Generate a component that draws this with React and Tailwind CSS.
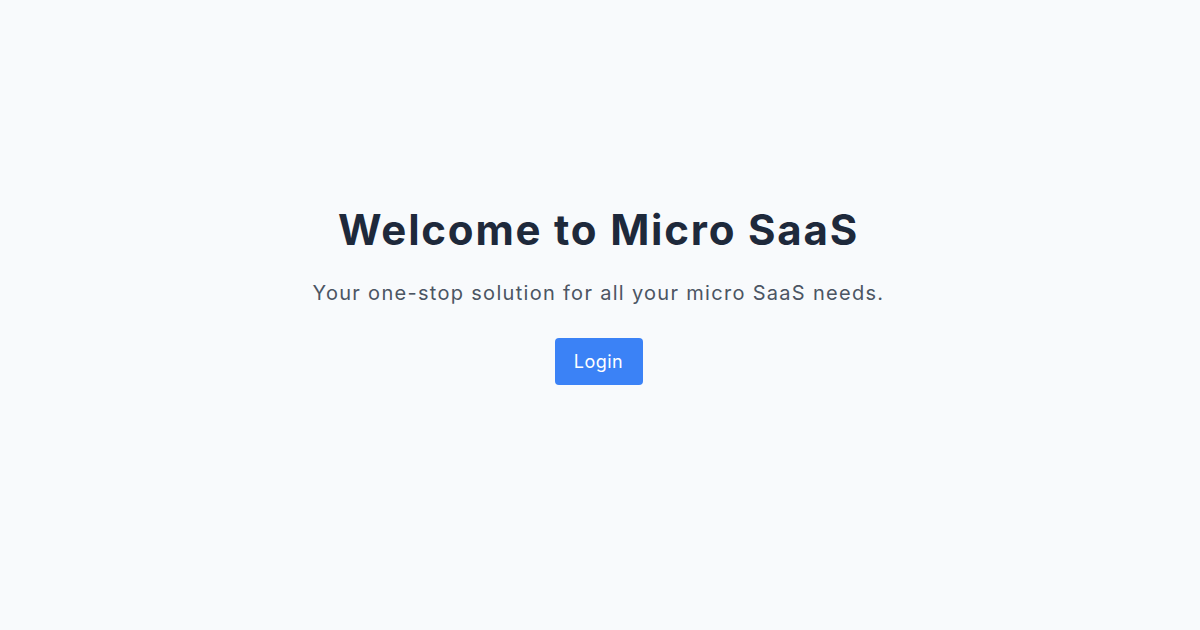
export default function App() {
    return (
        <div className="min-h-screen w-full bg-[#f8fafc] flex flex-col items-center pt-[203px] pr-[3px] font-['Inter',sans-serif]">
            <h1 className="text-[42px] leading-[54px] font-bold text-[#1e293b] tracking-[1.8px]">
                Welcome to Micro SaaS
            </h1>
            <p className="mt-[21px] text-[20px] leading-[30px] text-[#4b5563] tracking-[1.3px]">
                Your one-stop solution for all your micro SaaS needs.
            </p>
            <button className="mt-[30px] w-[88px] h-[47px] rounded-[4px] bg-[#3b82f6] text-white text-[18px] tracking-[0.5px]">
                Login
            </button>
        </div>
    );
}
